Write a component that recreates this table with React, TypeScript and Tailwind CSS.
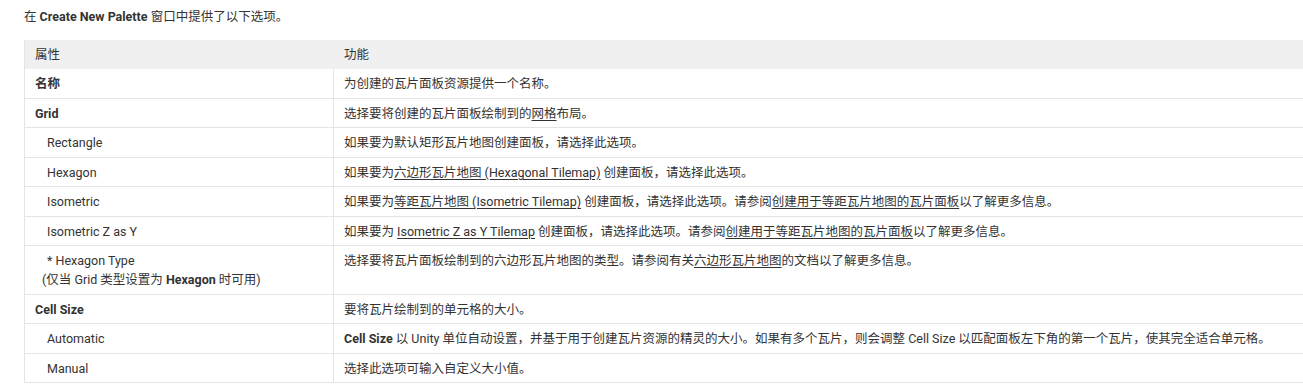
import React from "react";

const U = ({ children }: { children: React.ReactNode }) => (
  <span className="underline underline-offset-2">{children}</span>
);

type Row = { prop: React.ReactNode; desc: React.ReactNode; bold?: boolean; sub?: boolean };

const rows: Row[] = [
  { prop: "名称", bold: true, desc: "为创建的瓦片面板资源提供一个名称。" },
  { prop: "Grid", bold: true, desc: <>选择要将创建的瓦片面板绘制到的<U>网格</U>布局。</> },
  { prop: "Rectangle", sub: true, desc: "如果要为默认矩形瓦片地图创建面板，请选择此选项。" },
  { prop: "Hexagon", sub: true, desc: <>如果要为<U>六边形瓦片地图 (Hexagonal Tilemap)</U> 创建面板，请选择此选项。</> },
  { prop: "Isometric", sub: true, desc: <>如果要为<U>等距瓦片地图 (Isometric Tilemap)</U> 创建面板，请选择此选项。请参阅<U>创建用于等距瓦片地图的瓦片面板</U>以了解更多信息。</> },
  { prop: "Isometric Z as Y", sub: true, desc: <>如果要为 <U>Isometric Z as Y Tilemap</U> 创建面板，请选择此选项。请参阅<U>创建用于等距瓦片地图的瓦片面板</U>以了解更多信息。</> },
  {
    prop: (
      <>
        <div className="pl-[12px]">* Hexagon Type</div>
        <div className="pl-[7px]">(仅当 Grid 类型设置为 <b className="font-bold">Hexagon</b> 时可用)</div>
      </>
    ),
    desc: <>选择要将瓦片面板绘制到的六边形瓦片地图的类型。请参阅有关<U>六边形瓦片地图</U>的文档以了解更多信息。</>,
  },
  { prop: "Cell Size", bold: true, desc: "要将瓦片绘制到的单元格的大小。" },
  { prop: "Automatic", sub: true, desc: <><b className="font-bold">Cell Size</b> 以 Unity 单位自动设置，并基于用于创建瓦片资源的精灵的大小。如果有多个瓦片，则会调整 Cell Size 以匹配面板左下角的第一个瓦片，使其完全适合单元格。</> },
  { prop: "Manual", sub: true, desc: "选择此选项可输入自定义大小值。" },
];

export default function App() {
  return (
    <div
      className="w-[1303px] h-[386px] overflow-hidden bg-white text-[#333333] text-[12.5px] leading-[19px]"
      style={{ fontFamily: 'Roboto, "Noto Sans CJK SC", sans-serif' }}
    >
      <div className="pl-[24px] pt-[7px]">
        <p>
          在 <b className="font-bold">Create New Palette</b> 窗口中提供了以下选项。
        </p>
        <div className="mt-[14px] w-[1320px] border-l border-[#e4e4e4]">
          <div className="flex bg-[#f0f0f0] h-[29.33px]">
            <div className="w-[309px] shrink-0 pl-[10px] pt-[5px]">属性</div>
            <div className="flex-1 pl-[10px] pt-[5px]">功能</div>
          </div>
          {rows.map((r, i) => (
            <div key={i} className="flex border-b border-[#e4e4e4]">
              <div
                className={`w-[309px] shrink-0 border-r border-[#e4e4e4] pt-[5px] pb-[4.5px] ${
                  r.sub ? "pl-[22px]" : "pl-[10px]"
                } ${r.bold ? "font-bold" : ""}`}
              >
                {r.prop}
              </div>
              <div className="flex-1 pl-[10px] pt-[5px] pb-[4.5px]">{r.desc}</div>
            </div>
          ))}
        </div>
      </div>
    </div>
  );
}
